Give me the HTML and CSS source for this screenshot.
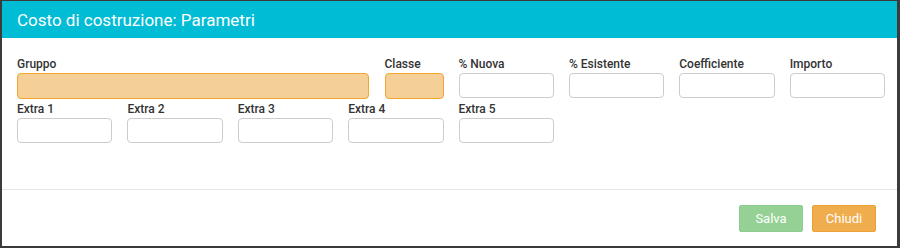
FILE: index.html
```html
<html>
<head>
    <link rel="stylesheet" href="styles.css">
</head>
<body>
    <div class="modal">
        <div class="modal-header">Costo di costruzione: Parametri</div>

        <div class="modal-body">
            <div class="fields">
                <!-- Gruppo + Classe share the first four columns -->
                <div class="field-pair">
                    <div class="field grow">
                        <label>Gruppo</label>
                        <input type="text" class="input-field required">
                    </div>
                    <div class="field small">
                        <label>Classe</label>
                        <input type="text" class="input-field required">
                    </div>
                </div>
                <div class="field">
                    <label>% Nuova</label>
                    <input type="text" class="input-field">
                </div>
                <div class="field">
                    <label>% Esistente</label>
                    <input type="text" class="input-field">
                </div>
                <div class="field">
                    <label>Coefficiente</label>
                    <input type="text" class="input-field">
                </div>
                <div class="field">
                    <label>Importo</label>
                    <input type="text" class="input-field">
                </div>

                <div class="field">
                    <label>Extra 1</label>
                    <input type="text" class="input-field">
                </div>
                <div class="field">
                    <label>Extra 2</label>
                    <input type="text" class="input-field">
                </div>
                <div class="field">
                    <label>Extra 3</label>
                    <input type="text" class="input-field">
                </div>
                <div class="field">
                    <label>Extra 4</label>
                    <input type="text" class="input-field">
                </div>
                <div class="field">
                    <label>Extra 5</label>
                    <input type="text" class="input-field">
                </div>
            </div>
        </div>

        <div class="modal-footer">
            <button class="btn btn-save" disabled>Salva</button>
            <button class="btn btn-close">Chiudi</button>
        </div>
    </div>
</body>
</html>
```

FILE: styles.css
```css
body {
    font-family: Roboto, "Noto Sans", sans-serif;
    background-color: #3b3b3b;
    margin: 0;
    padding: 1px 3px 2px 2px;
    height: 248px;
    box-sizing: border-box;
}
.modal {
    background: #fff;
    height: 245px;
    display: flex;
    flex-direction: column;
}
.modal-header {
    background-color: #00bcd4;
    color: #fff;
    font-size: 17px;
    height: 37px;
    line-height: 39px;
    padding-left: 15px;
}
.modal-body {
    padding: 19px 0 0 15px;
    height: 132px;
    border-bottom: 1px solid #e5e5e5;
}
.fields {
    width: 868px;
    display: grid;
    grid-template-columns: repeat(8, 1fr);
    column-gap: 15px;
    row-gap: 3px;
}
.field-pair {
    grid-column: span 4;
    display: flex;
    gap: 16px;
}
.field {
    display: flex;
    flex-direction: column;
}
.field.grow {
    flex: 1;
}
.field.small {
    width: 59px;
}
.field label {
    font-size: 12px;
    font-weight: 500;
    line-height: 14px;
    color: #333;
    margin-bottom: 2px;
}
.input-field {
    height: 25px;
    border: 1px solid #ccc;
    border-radius: 4px;
    box-sizing: border-box;
    width: 100%;
    margin: 0;
}
.input-field.required {
    background-color: #f5cf98;
    border-color: #f3a72c;
    height: 26px;
}
.modal-footer {
    display: flex;
    justify-content: flex-end;
    gap: 9px;
    padding: 15px 21px 0 0;
}
.btn {
    color: #fff;
    border: 1px solid transparent;
    width: 64px;
    height: 27px;
    font-family: Roboto, sans-serif;
    font-size: 13px;
    border-radius: 2px;
    padding: 0;
}
.btn-save {
    background-color: #95d195;
    border-color: #8ccc8c;
}
.btn-close {
    background-color: #f0ad4e;
    border-color: #eea236;
}
```
